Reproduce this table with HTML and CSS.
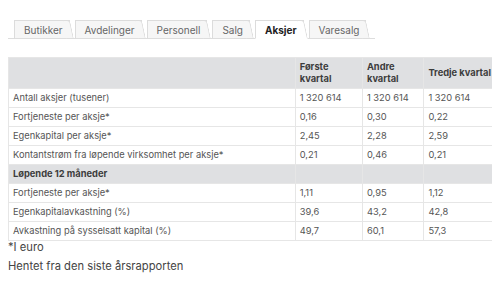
FILE: index.html
```html
<!DOCTYPE html>
<html lang="no">
<head>
<meta charset="utf-8">
<link rel="stylesheet" href="styles.css">
</head>
<body>
<div class="tabs">
  <div class="tab">Butikker</div>
  <div class="tab">Avdelinger</div>
  <div class="tab">Personell</div>
  <div class="tab">Salg</div>
  <div class="tab active">Aksjer</div>
  <div class="tab">Varesalg</div>
</div>
<table class="data">
  <colgroup>
    <col class="c1"><col class="c2"><col class="c3"><col class="c4">
  </colgroup>
  <thead>
    <tr><th></th><th>Første<br>kvartal</th><th>Andre<br>kvartal</th><th>Tredje kvartal</th></tr>
  </thead>
  <tbody>
    <tr><td>Antall aksjer (tusener)</td><td>1 320 614</td><td>1 320 614</td><td>1 320 614</td></tr>
    <tr><td>Fortjeneste per aksje*</td><td>0,16</td><td>0,30</td><td>0,22</td></tr>
    <tr><td>Egenkapital per aksje*</td><td>2,45</td><td>2,28</td><td>2,59</td></tr>
    <tr><td>Kontantstrøm fra løpende virksomhet per aksje*</td><td>0,21</td><td>0,46</td><td>0,21</td></tr>
    <tr class="section"><th>Løpende 12 måneder</th><th></th><th></th><th></th></tr>
    <tr><td>Fortjeneste per aksje*</td><td>1,11</td><td>0,95</td><td>1,12</td></tr>
    <tr><td>Egenkapitalavkastning (%)</td><td>39,6</td><td>43,2</td><td>42,8</td></tr>
    <tr><td>Avkastning på sysselsatt kapital (%)</td><td>49,7</td><td>60,1</td><td>57,3</td></tr>
  </tbody>
</table>
<p class="note">*I euro</p>
<p class="note second">Hentet fra den siste årsrapporten</p>
</body>
</html>
```
FILE: styles.css
```css
body {
  margin: 8px;
  font-family: Inter, "Noto Sans", sans-serif;
  color: #555;
  background: #fff;
}
.tabs {
  display: inline-flex;
  margin-top: 12px;
  padding-left: 6px;
  padding-right: 4px;
  border-bottom: 1px solid #ddd;
  align-items: flex-end;
}
.tab {
  position: relative;
  font-size: 10px;
  line-height: 13px;
  height: 13px;
  padding: 3px 7px 1px 9px;
  margin-right: 5px;
  margin-bottom: -1px;
  color: #666;
  background: #f6f6f6;
  border-top: 1px solid #dcdcdc;
  border-left: 1px solid #dcdcdc;
  border-bottom: 1px solid #ddd;
}
.tab::after {
  content: "";
  position: absolute;
  top: -1px;
  bottom: -1px;
  right: -4px;
  width: 6px;
  background: #f6f6f6;
  border-top: 1px solid #dcdcdc;
  border-right: 1px solid #dcdcdc;
  border-bottom: 1px solid #ddd;
  border-top-right-radius: 3px;
  transform: skewX(12deg);
  transform-origin: bottom left;
}
.tab.active {
  background: #fff;
  color: #222;
  font-weight: 700;
  border-bottom-color: #fff;
  z-index: 2;
}
.tab.active::after {
  background: #fff;
  border-bottom-color: #fff;
}
.data {
  margin-top: 18px;
  width: 488px;
  border-collapse: collapse;
  font-size: 9.3px;
  line-height: 12px;
  border: 1px solid #e6e6e6;
}
.c1 { width: 290px; }
.c2 { width: 68px; }
.c3 { width: 62px; }
.c4 { width: 68px; }
.data th, .data td {
  text-align: left;
  padding: 3px 4px;
  border: 1px solid #e6e6e6;
  height: 11.5px;
  white-space: nowrap;
}
.data thead th {
  background: #dfe0e2;
  color: #3c3c3c;
  font-weight: 700;
  height: 23px;
  vertical-align: middle;
}
.data .section th {
  background: #dfe0e2;
  color: #3c3c3c;
  font-weight: 700;
}
.note {
  margin: 0;
  font-size: 11.2px;
  line-height: 13px;
  color: #444;
}
.note.second {
  margin-top: 6px;
}
```
